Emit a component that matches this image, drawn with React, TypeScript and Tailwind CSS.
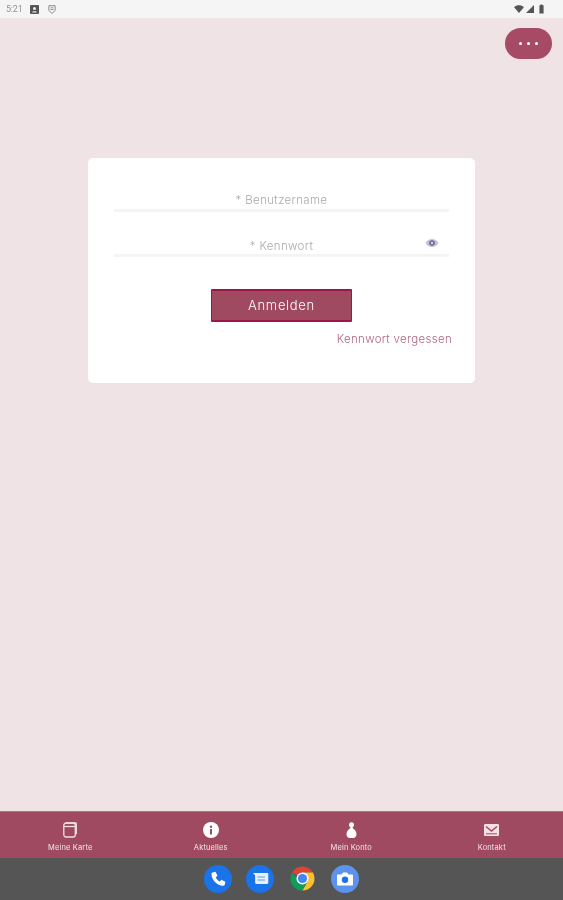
import React from "react";

function StatusBar() {
  return (
    <div className="h-[18px] bg-[#f6f5f5] flex items-center pl-[6px] pr-[19px] text-[#6b6b6b]">
      <span className="text-[9px] leading-none font-['Roboto',sans-serif] opacity-70 w-[24px] tracking-[-0.2px]">5:21</span>
      <svg width="9" height="9" viewBox="0 0 9 9">
        <rect width="9" height="9" rx="1" fill="#555" />
        <circle cx="4.5" cy="3.4" r="1.5" fill="#eee" />
        <path d="M2 7.5c.4-1.6 4.600-1.600 5 0z" fill="#eee" />
      </svg>
      <svg width="8" height="11" viewBox="0 0 9 11" className="ml-[9px]">
        <path d="M1 1.200h7v5.300L4.500 10 1 6.500z" fill="none" stroke="#888" strokeWidth="1.100" />
        <path d="M2.800 3.600h3.400M2.800 5.600h3.400" stroke="#888" strokeWidth="1" />
      </svg>
      <div className="ml-auto flex items-center gap-[2px]">
        <svg width="10" height="8" viewBox="0 0 11 9"><path d="M0 2.400C3 -.4 8-.4 11 2.400L5.500 9z" fill="#555" /></svg>
        <svg width="8" height="8" viewBox="0 0 9 9"><path d="M9 0v9H0z" fill="#555" /></svg>
        <svg width="5" height="10" viewBox="0 0 6 11" className="ml-[3px]"><path d="M1.800 0h2.400v1H5.500v10H.5V1h1.300z" fill="#555" /></svg>
      </div>
    </div>
  );
}

function Eye() {
  return (
    <svg width="14" height="10" viewBox="0 0 14 10" className="absolute right-[10px] top-0">
      <path d="M.5 5C3.500-.3 10.500-.3 13.500 5 10.500 10.300 3.500 10.300.5 5z" fill="#c3bfd6" />
      <circle cx="7" cy="5" r="2.800" fill="#6e6a9c" />
      <circle cx="7" cy="5" r="1.200" fill="#d8d6e6" />
    </svg>
  );
}

const navItems = [
  {
    label: "Meine Karte",
    icon: (
      <svg width="14" height="16" viewBox="0 0 14 16" fill="none" stroke="#f1dfe4" strokeWidth="1.300">
        <path d="M3 1h9.500c.4 0 .8.400.8.800v10.500" />
        <rect x=".8" y="1" width="11.500" height="14" rx="2.200" />
        <path d="M1 4.500h11" />
      </svg>
    ),
  },
  {
    label: "Aktuelles",
    icon: (
      <svg width="16" height="16" viewBox="0 0 16 16">
        <circle cx="8" cy="8" r="8" fill="#fff" />
        <rect x="7" y="7" width="2" height="5.500" fill="#a04a62" />
        <circle cx="8" cy="4.700" r="1.200" fill="#a04a62" />
      </svg>
    ),
  },
  {
    label: "Mein Konto",
    icon: (
      <svg width="11" height="16" viewBox="0 0 11 16">
        <circle cx="5.500" cy="2.800" r="2.500" fill="#fff" />
        <path d="M4.500 5h2c.2 1 .6 1.500 1.500 2.300 1.500 1.300 2.500 3 2.500 5 0 2.300-1.500 3.700-3.500 3.700H4c-2 0-3.500-1.400-3.500-3.700 0-2 1-3.700 2.500-5C3.900 6.500 4.300 6 4.500 5z" fill="#fff" />
      </svg>
    ),
  },
  {
    label: "Kontakt",
    icon: (
      <svg width="15" height="12" viewBox="0 0 15 12" fill="none">
        <rect width="15" height="12" rx="1.200" fill="#f3dfe5" />
        <path d="M2 2.500l5.500 4.500 5.500-4.500" stroke="#a04a62" strokeWidth="1.400" />
        <path d="M2 9.800h11" stroke="#a04a62" strokeWidth="1" />
      </svg>
    ),
  },
];

function Dock() {
  return (
    <div className="h-[42px] bg-[#555555] flex items-center justify-center gap-[14px] pb-[1px]">
      <svg width="28" height="28" viewBox="0 0 28 28">
        <circle cx="14" cy="14" r="14" fill="#1a73e8" />
        <path d="M8.500 7.500l3-.7 2 4-1.700 1.700c.8 1.800 2.100 3.100 3.900 3.900l1.700-1.700 4 2-.7 3c-.2.700-.8 1-1.500 1C13 20.500 7.500 15 7.500 9c0-.7.300-1.300 1-1.500z" fill="#fff" />
      </svg>
      <svg width="28" height="28" viewBox="0 0 28 28">
        <circle cx="14" cy="14" r="14" fill="#1a73e8" />
        <path d="M7 8h14.500c.5 0 .8.300.8.800v9c0 .7-.5 1.200-1.200 1.200H10.500c-.8 0-1.400-.6-1.400-1.400V10.500z" fill="#e8f0fe" />
        <path d="M11.500 12h7.500M11.500 15h7.500" stroke="#8ab4f8" strokeWidth="1.300" />
      </svg>
      <svg width="29" height="29" viewBox="0 0 48 48">
        <path d="M24 24 L6.700 14 A20 20 0 0 1 41.300 14 L24 14z" fill="#db4437" />
        <path d="M6.700 14 A20 20 0 0 0 24 44 L33 24 L24 32z" fill="#0f9d58" />
        <path d="M41.300 14 A20 20 0 0 1 24 44 L33 28 L33 20 L24 14z" fill="#fbc02d" />
        <circle cx="24" cy="24" r="10" fill="#fff" />
        <circle cx="24" cy="24" r="7.600" fill="#4285f4" />
      </svg>
      <svg width="28" height="28" viewBox="0 0 28 28">
        <circle cx="14" cy="14" r="14" fill="#5c93ee" />
        <path d="M6 10.500c0-.6.400-1 1-1h3.500l1.500-2h4l1.500 2H21c.6 0 1 .4 1 1v9c0 .6-.4 1-1 1H7c-.6 0-1-.4-1-1z" fill="#fff" />
        <circle cx="14" cy="14.700" r="3.200" fill="#1a73e8" />
      </svg>
    </div>
  );
}

export default function App() {
  return (
    <div className="w-[563px] h-[900px] overflow-hidden flex flex-col bg-[#efe3e5] font-['Inter',sans-serif] blur-[0.4px]">
      <StatusBar />
      <main className="flex-1 flex flex-col">
        <div className="flex justify-end pt-[10px] pr-[11px]">
          <button className="w-[47px] h-[31px] rounded-full bg-[#a64a65] flex items-center justify-center gap-[5px]">
            <span className="w-[3px] h-[3px] rounded-full bg-white" />
            <span className="w-[3px] h-[3px] rounded-full bg-white" />
            <span className="w-[3px] h-[3px] rounded-full bg-white" />
          </button>
        </div>
        <section className="mt-[99px] ml-[88px] w-[387px] h-[225px] bg-white rounded-[5px] px-[26px] pt-[35px] flex flex-col">
          <div className="h-[15px] pt-[1px] border-b-[3px] border-[#f5f3f3] box-content text-center text-[11.500px] leading-[13px] font-light text-[#a9a9a9] tracking-[0.35px]">
            * Benutzername
          </div>
          <div className="relative mt-[26px] h-[15px] pt-[1px] border-b-[3px] border-[#f5f3f3] box-content text-center text-[11.500px] leading-[15px] font-light text-[#a9a9a9] tracking-[0.35px]">
            * Kennwort
            <Eye />
          </div>
          <button className="self-center mt-[32px] w-[141px] h-[33px] bg-[#a04a62] border-y-2 border-x border-[#a0144c] rounded-[1px] text-white text-[13px] font-light tracking-[0.7px]">
            Anmelden
          </button>
          <a className="self-end mr-[-3px] mt-[10px] text-[11.500px] leading-[14px] font-light text-[#b0687e] tracking-[0.3px]">
            Kennwort vergessen
          </a>
        </section>
      </main>
      <nav className="h-[47px] bg-[#a04a62] border-t border-[#b77084] grid grid-cols-4 pr-[1px]">
        {navItems.map((n) => (
          <div key={n.label} className="flex flex-col items-center pt-[9px]">
            <div className="h-[17px] flex items-center justify-center">{n.icon}</div>
            <span className="mt-[5px] text-[7.500px] leading-[9px] text-[#f3e3e8] tracking-[0.15px]">{n.label}</span>
          </div>
        ))}
      </nav>
      <Dock />
    </div>
  );
}
